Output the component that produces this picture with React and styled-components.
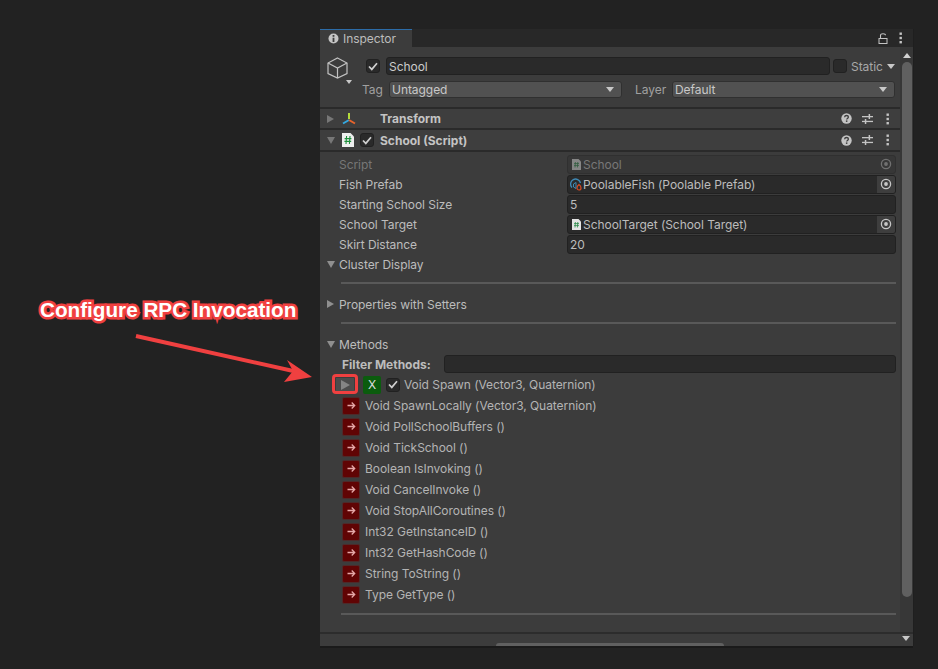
import styled, { createGlobalStyle } from "styled-components";

const GlobalStyle = createGlobalStyle`
  html, body {
    margin: 0;
    height: 100%;
    background: #222222;
    overflow: hidden;
  }
  * { box-sizing: border-box; }
`;

const Page = styled.div`
  position: relative;
  width: 938px;
  height: 669px;
  padding: 29px 0 0 320px;
  font-family: "Inter", "Liberation Sans", sans-serif;
  font-size: 12px;
  letter-spacing: -0.05px;
  color: #bcbcbc;
`;

const Win = styled.div`
  width: 593px;
  height: 617px;
  display: flex;
  flex-direction: column;
  background: #3c3c3c;
  box-shadow: 0 2px 0 #1a1a1a, 1px 0 0 #1f1f1f;
`;

const TabBar = styled.div`
  height: 18px;
  flex: none;
  display: flex;
  justify-content: space-between;
  align-items: center;
  background: #282828;
`;

const Tab = styled.div`
  width: 92px;
  height: 18px;
  padding-left: 8px;
  display: flex;
  align-items: center;
  gap: 4px;
  background: #3c3c3c;
  border-top: 1px solid #2c6ca8;
  line-height: 18px;
`;

const TabTools = styled.div`
  display: flex;
  align-items: center;
  gap: 11px;
  padding-right: 10px;
`;

const Middle = styled.div`
  flex: 1;
  min-height: 0;
  display: flex;
`;

const Content = styled.div`
  flex: 1;
  min-width: 0;
  display: flex;
  flex-direction: column;
`;

const ObjectHeader = styled.div`
  height: 62px;
  flex: none;
  display: flex;
  border-bottom: 2px solid #2a2a2a;
  padding: 10px 5px 0 7px;
`;

const CubeSlot = styled.div`
  width: 32px;
  flex: none;
  position: relative;
`;

const HeaderRows = styled.div`
  flex: 1;
  display: flex;
  flex-direction: column;
  gap: 6px;
`;

const NameRow = styled.div`
  display: flex;
  align-items: center;
  height: 18px;
  padding-left: 7px;
`;

const TagRow = styled.div`
  display: flex;
  align-items: center;
  height: 17px;
  padding-left: 3px;
`;

const Check = styled.span`
  width: 14px;
  height: 14px;
  flex: none;
  display: inline-flex;
  align-items: center;
  justify-content: center;
  margin-left: ${(p) => p.$ml || 0}px;
  background: #2a2a2a;
  border: 1px solid #212121;
  border-radius: 3px;
`;

const NameField = styled.div`
  flex: 1;
  height: 18px;
  margin: 0 3px 0 6px;
  padding-left: 2px;
  line-height: 17px;
  background: #2a2a2a;
  border: 1px solid #212121;
  border-radius: 3px;
  color: #cccccc;
`;

const StaticLabel = styled.span`
  margin-left: 4px;
  width: 36px;
  color: #a8a8a8;
`;

const MutedLabel = styled.span`
  color: #a0a0a0;
  width: ${(p) => p.$w}px;
  flex: none;
  margin-left: ${(p) => p.$ml || 0}px;
`;

const Select = styled.div`
  width: ${(p) => p.$w}px;
  height: 17px;
  flex: none;
  display: flex;
  align-items: center;
  justify-content: space-between;
  padding: 0 7px 0 2px;
  background: #515151;
  border: 1px solid #303030;
  border-radius: 3px;
  color: #c8c8c8;
`;

const Caret = styled.i`
  display: inline-block;
  width: 0;
  height: 0;
  border-left: 4px solid transparent;
  border-right: 4px solid transparent;
  border-top: 5px solid #c8c8c8;
`;

const SmallCaret = styled(Caret)`
  position: absolute;
  left: 19px;
  top: 23px;
  border-left-width: 3px;
  border-right-width: 3px;
  border-top-width: 4px;
`;

const CompHeader = styled.div`
  height: ${(p) => p.$h}px;
  flex: none;
  display: flex;
  align-items: center;
  background: #3e3e3e;
  border-bottom: 2px solid #2a2a2a;
  padding: 0 10px 0 7px;
  font-weight: 700;
  letter-spacing: 0;
  color: #c4c4c4;
`;

const CompIcon = styled.span`
  display: flex;
  flex: none;
  margin-left: 7px;
`;

const CompTitle = styled.span`
  flex: 1;
  margin-left: ${(p) => p.$ml}px;
`;

const HeadTools = styled.div`
  display: flex;
  align-items: center;
  gap: 10px;
`;

const DotsSlot = styled.span`
  display: flex;
  margin-left: 3px;
`;

const Fold = styled.i`
  display: inline-block;
  width: 0;
  height: 0;
  flex: none;
  ${(p) =>
    p.$open
      ? `border-left: 4px solid transparent;
         border-right: 4px solid transparent;
         border-top: 7px solid ${p.$c || "#8f8f8f"};`
      : `margin-right: 1px;
         border-top: 4px solid transparent;
         border-bottom: 4px solid transparent;
         border-left: 7px solid ${p.$c || "#8f8f8f"};`}
`;

const Props = styled.div`
  padding-top: 2px;
  display: flex;
  flex-direction: column;
`;

const PropRow = styled.div`
  height: 20px;
  flex: none;
  display: flex;
  align-items: center;
  padding-left: 19px;
  color: ${(p) => (p.$off ? "#777777" : "#bcbcbc")};
`;

const PropLabel = styled.span`
  width: 228px;
  flex: none;
`;

const Field = styled.div`
  width: 329px;
  height: 19px;
  display: flex;
  align-items: center;
  padding-left: 2px;
  background: ${(p) => (p.$off ? "#373737" : "#2a2a2a")};
  border: 1px solid ${(p) => (p.$off ? "#303030" : "#212121")};
  border-radius: 3px;
`;

const FieldIcon = styled.span`
  width: 13px;
  flex: none;
  display: flex;
  align-items: center;
  justify-content: center;
`;

const FieldText = styled.span`
  flex: 1;
  white-space: nowrap;
`;

const Picker = styled.span`
  width: 18px;
  height: 17px;
  flex: none;
  display: flex;
  align-items: center;
  justify-content: center;
  background: ${(p) => (p.$off ? "transparent" : "#3e3e3e")};
  border-radius: 0 2px 2px 0;
`;

const Section = styled.div`
  height: 20px;
  flex: none;
  display: flex;
  align-items: center;
  gap: 4px;
  padding-left: 7px;
  color: #bcbcbc;
`;

const Rule = styled.div`
  height: 2px;
  flex: none;
  margin: ${(p) => p.$mt}px 4px ${(p) => p.$mb}px 21px;
  background: #595959;
`;

const FilterRow = styled.div`
  height: 20px;
  flex: none;
  display: flex;
  align-items: center;
  padding-left: 22px;
  font-weight: 700;
  letter-spacing: 0;
  color: #bcbcbc;
`;

const FilterLabel = styled.span`
  width: 102px;
  flex: none;
`;

const FilterField = styled.div`
  width: 452px;
  height: 18px;
  background: #2a2a2a;
  border: 1px solid #212121;
  border-radius: 3px;
`;

const MethodRow = styled.div`
  height: 21px;
  flex: none;
  display: flex;
  align-items: center;
  padding-left: 22px;
  color: #b4b4b4;
`;

const SpawnRow = styled(MethodRow)`
  padding-left: 16px;
`;

const Highlight = styled.span`
  position: relative;
  width: 18px;
  height: 14px;
  flex: none;
  margin-right: 9px;
  display: flex;
  align-items: center;
  justify-content: center;
  background: #4c4c4c;

  &::after {
    content: "";
    position: absolute;
    inset: -4px -4px -2px -4px;
    border: 3px solid #f04040;
    border-radius: 4px;
  }
`;

const XButton = styled.span`
  width: 18px;
  height: 18px;
  flex: none;
  margin-right: 5px;
  display: flex;
  align-items: center;
  justify-content: center;
  background: #0b5c0e;
  border-radius: 2px;
  color: #dddddd;
`;

const RedButton = styled.span`
  width: 18px;
  height: 18px;
  flex: none;
  margin-right: 5px;
  display: flex;
  align-items: center;
  justify-content: center;
  background: #600404;
  border: 1px solid #4e2a2a;
  border-radius: 2px;
`;

const SpawnText = styled.span`
  margin-left: 4px;
`;

const BottomRule = styled(Rule)`
  margin: 8px 4px 0 21px;
`;

const Spacer = styled.div`
  flex: 1;
`;

const VScroll = styled.div`
  width: 13px;
  flex: none;
  display: flex;
  flex-direction: column;
  align-items: center;
  padding-top: 6px;
  background: #373737;
`;

const ScrollThumb = styled.div`
  width: 10px;
  height: 535px;
  margin-top: 4px;
  background: #606060;
  border-radius: 5px;
`;

const UpArrow = styled.i`
  width: 0;
  height: 0;
  border-left: 4px solid transparent;
  border-right: 4px solid transparent;
  border-bottom: 5px solid #d0d0d0;
`;

const HScroll = styled.div`
  height: 14px;
  flex: none;
  display: flex;
  align-items: flex-end;
  padding-left: 176px;
  border-top: 2px solid #2c2c2c;
  position: relative;
`;

const HThumb = styled.div`
  width: 228px;
  height: 3px;
  background: #606060;
  border-radius: 3px 3px 0 0;
`;

const DownArrow = styled(Caret)`
  position: absolute;
  right: 3px;
  top: 2px;
`;

const CalloutText = styled.div`
  position: absolute;
  left: 40px;
  top: 298px;
  font-family: "Liberation Sans", Arial, sans-serif;
  font-size: 20.7px;
  font-weight: 700;
  line-height: 24px;
  letter-spacing: 0;
  white-space: nowrap;
  color: #ffffff;
  -webkit-text-stroke: 5px #f04040;
  paint-order: stroke fill;
`;

const CalloutArrow = styled.svg`
  position: absolute;
  left: 130px;
  top: 330px;
`;

const Dots = () => (
  <svg width="4" height="12" viewBox="0 0 4 12">
    <g fill="#c4c4c4">
      <rect x="0.5" y="0.5" width="2.4" height="2.4" />
      <rect x="0.5" y="4.8" width="2.4" height="2.4" />
      <rect x="0.5" y="9" width="2.4" height="2.4" />
    </g>
  </svg>
);

const Lock = () => (
  <svg width="10" height="11" viewBox="0 0 10 11" fill="none" stroke="#c4c4c4">
    <path d="M2.5 5V2.6C2.5 1.2 3.4.7 5 .7s2.5.5 2.5 1.6" strokeWidth="1.1" />
    <rect x="1" y="5.5" width="8" height="5" />
  </svg>
);

const InfoIcon = () => (
  <svg width="11" height="11" viewBox="0 0 11 11">
    <circle cx="5.5" cy="5.5" r="5" fill="#c4c4c4" />
    <rect x="4.6" y="2" width="1.8" height="1.8" fill="#3c3c3c" />
    <rect x="4.6" y="4.7" width="1.8" height="4.3" fill="#3c3c3c" />
  </svg>
);

const Cube = () => (
  <svg width="21" height="22" viewBox="0 0 21 22" fill="none" stroke="#c2c2c2" strokeWidth="1.2">
    <path d="M10.5 1 20 6v10.5L10.5 21 1 16.5V6z" />
    <path d="M1 6l9.5 5L20 6M10.5 11v10" />
  </svg>
);

const Tick = () => (
  <svg width="10" height="9" viewBox="0 0 10 9" fill="none" stroke="#d0d0d0" strokeWidth="1.7">
    <path d="M1 4.5 3.8 7.4 9 1.2" />
  </svg>
);

const AxisIcon = () => (
  <svg width="14" height="14" viewBox="0 0 14 14" fill="none" strokeWidth="2">
    <path d="M7 7V1" stroke="#b5dc3c" />
    <path d="M7 8 1 11.5" stroke="#35a8e0" />
    <path d="M7 8l6 3.5" stroke="#e8642c" />
  </svg>
);

const ScriptIcon = () => (
  <svg width="12" height="14" viewBox="0 0 12 14">
    <path d="M0 0h8.5L12 3.5V14H0z" fill="#eeeeee" />
    <path d="M4.6 3 4 11M8 3l-.6 8M2.6 5.6h6.8M2.4 8.4h6.8" stroke="#1f8f3c" strokeWidth="1.1" />
  </svg>
);

const SmallScript = ({ dim }) => (
  <svg width="9" height="11" viewBox="0 0 9 11" opacity={dim ? 0.45 : 1}>
    <path d="M0 0h6.5L9 2.5V11H0z" fill="#e4e4e4" />
    <path d="M3.4 3 3 8.5M5.8 3l-.4 5.5M2 4.6h5M2 6.6h5" stroke="#2a8a48" strokeWidth="0.8" />
  </svg>
);

const PrefabIcon = () => (
  <svg width="13" height="13" viewBox="0 0 13 13" fill="none">
    <path d="M2 9.5A5 5 0 1 1 10.5 5" stroke="#3f88b4" strokeWidth="1.4" />
    <path d="M6 4.5 3.5 6v3L6 10.5z" stroke="#3f88b4" strokeWidth="1" />
    <path d="M9 6.5c1.6 1.2 2 2.4 2 3.500a2 2 0 0 1-4 0c0-1.100.4-2.300 2-3.500z" stroke="#d24a24" strokeWidth="1.2" />
  </svg>
);

const HelpIcon = () => (
  <svg width="11" height="11" viewBox="0 0 11 11">
    <circle cx="5.5" cy="5.5" r="5.2" fill="#c4c4c4" />
    <path d="M3.6 4.2C3.700 3 4.500 2.500 5.500 2.500s1.900.6 1.900 1.600c0 1.300-1.700 1.300-1.700 2.500" fill="none" stroke="#3e3e3e" strokeWidth="1.3" />
    <rect x="4.9" y="7.4" width="1.5" height="1.5" fill="#3e3e3e" />
  </svg>
);

const Sliders = () => (
  <svg width="11" height="10" viewBox="0 0 11 10" fill="#c4c4c4">
    <rect x="0" y="2" width="11" height="1.3" />
    <rect x="0" y="6.8" width="11" height="1.3" />
    <rect x="6.6" y="0" width="1.5" height="5" />
    <rect x="2.8" y="5" width="1.5" height="5" />
  </svg>
);

const Target = ({ dim }) => (
  <svg width="12" height="12" viewBox="0 0 12 12" opacity={dim ? 0.4 : 1}>
    <circle cx="6" cy="6" r="4.6" fill="none" stroke="#c8c8c8" strokeWidth="1.3" />
    <circle cx="6" cy="6" r="1.9" fill="#c8c8c8" />
  </svg>
);

const RightArrow = () => (
  <svg width="9" height="9" viewBox="0 0 9 9" fill="none" stroke="#e6a8a8" strokeWidth="1.3">
    <path d="M.5 4.500h7M4.700 1.500l3 3-3 3" />
  </svg>
);

const PlayIcon = () => (
  <svg width="9" height="10" viewBox="0 0 9 10">
    <path d="M0 0 9 5 0 10z" fill="#858585" />
  </svg>
);

const HeaderTools = () => (
  <HeadTools>
    <HelpIcon />
    <Sliders />
    <DotsSlot>
      <Dots />
    </DotsSlot>
  </HeadTools>
);

const methods = [
  "Void SpawnLocally (Vector3, Quaternion)",
  "Void PollSchoolBuffers ()",
  "Void TickSchool ()",
  "Boolean IsInvoking ()",
  "Void CancelInvoke ()",
  "Void StopAllCoroutines ()",
  "Int32 GetInstanceID ()",
  "Int32 GetHashCode ()",
  "String ToString ()",
  "Type GetType ()",
];

export default function App() {
  return (
    <Page>
      <GlobalStyle />
      <Win>
        <TabBar>
          <Tab>
            <InfoIcon />
            Inspector
          </Tab>
          <TabTools>
            <Lock />
            <Dots />
          </TabTools>
        </TabBar>
        <Middle>
          <Content>
            <ObjectHeader>
              <CubeSlot>
                <Cube />
                <SmallCaret />
              </CubeSlot>
              <HeaderRows>
                <NameRow>
                  <Check>
                    <Tick />
                  </Check>
                  <NameField>School</NameField>
                  <Check />
                  <StaticLabel>Static</StaticLabel>
                  <Caret />
                </NameRow>
                <TagRow>
                  <MutedLabel $w={27}>Tag</MutedLabel>
                  <Select $w={233}>
                    Untagged
                    <Caret />
                  </Select>
                  <MutedLabel $w={37} $ml={13}>
                    Layer
                  </MutedLabel>
                  <Select $w={223}>
                    Default
                    <Caret />
                  </Select>
                </TagRow>
              </HeaderRows>
            </ObjectHeader>
            <CompHeader $h={21}>
              <Fold $c="#777777" />
              <CompIcon>
                <AxisIcon />
              </CompIcon>
              <CompTitle $ml={24}>Transform</CompTitle>
              <HeaderTools />
            </CompHeader>
            <CompHeader $h={22}>
              <Fold $open $c="#777777" />
              <CompIcon>
                <ScriptIcon />
              </CompIcon>
              <Check $ml={6}>
                <Tick />
              </Check>
              <CompTitle $ml={6}>School (Script)</CompTitle>
              <HeaderTools />
            </CompHeader>
            <Props>
              <PropRow $off>
                <PropLabel>Script</PropLabel>
                <Field $off>
                  <FieldIcon>
                    <SmallScript dim />
                  </FieldIcon>
                  <FieldText>School</FieldText>
                  <Picker $off>
                    <Target dim />
                  </Picker>
                </Field>
              </PropRow>
              <PropRow>
                <PropLabel>Fish Prefab</PropLabel>
                <Field>
                  <FieldIcon>
                    <PrefabIcon />
                  </FieldIcon>
                  <FieldText>PoolableFish (Poolable Prefab)</FieldText>
                  <Picker>
                    <Target />
                  </Picker>
                </Field>
              </PropRow>
              <PropRow>
                <PropLabel>Starting School Size</PropLabel>
                <Field>
                  <FieldText>5</FieldText>
                </Field>
              </PropRow>
              <PropRow>
                <PropLabel>School Target</PropLabel>
                <Field>
                  <FieldIcon>
                    <SmallScript />
                  </FieldIcon>
                  <FieldText>SchoolTarget (School Target)</FieldText>
                  <Picker>
                    <Target />
                  </Picker>
                </Field>
              </PropRow>
              <PropRow>
                <PropLabel>Skirt Distance</PropLabel>
                <Field>
                  <FieldText>20</FieldText>
                </Field>
              </PropRow>
              <Section>
                <Fold $open />
                Cluster Display
              </Section>
              <Rule $mt={8} $mb={10} />
              <Section>
                <Fold />
                Properties with Setters
              </Section>
              <Rule $mt={8} $mb={10} />
              <Section>
                <Fold $open />
                Methods
              </Section>
              <FilterRow>
                <FilterLabel>Filter Methods:</FilterLabel>
                <FilterField />
              </FilterRow>
              <SpawnRow>
                <Highlight>
                  <PlayIcon />
                </Highlight>
                <XButton>X</XButton>
                <Check>
                  <Tick />
                </Check>
                <SpawnText>Void Spawn (Vector3, Quaternion)</SpawnText>
              </SpawnRow>
              {methods.map((name) => (
                <MethodRow key={name}>
                  <RedButton>
                    <RightArrow />
                  </RedButton>
                  {name}
                </MethodRow>
              ))}
              <BottomRule />
            </Props>
            <Spacer />
          </Content>
          <VScroll>
            <UpArrow />
            <ScrollThumb />
          </VScroll>
        </Middle>
        <HScroll>
          <HThumb />
          <DownArrow />
        </HScroll>
      </Win>
      <CalloutText>Configure RPC Invocation</CalloutText>
      <CalloutArrow width="190" height="56" viewBox="0 0 190 56">
        <path d="M6 6 170 42.500" stroke="#f04040" strokeWidth="4" />
        <path d="M182 47 154 52 163 41 157 30z" fill="#f04040" />
      </CalloutArrow>
    </Page>
  );
}
